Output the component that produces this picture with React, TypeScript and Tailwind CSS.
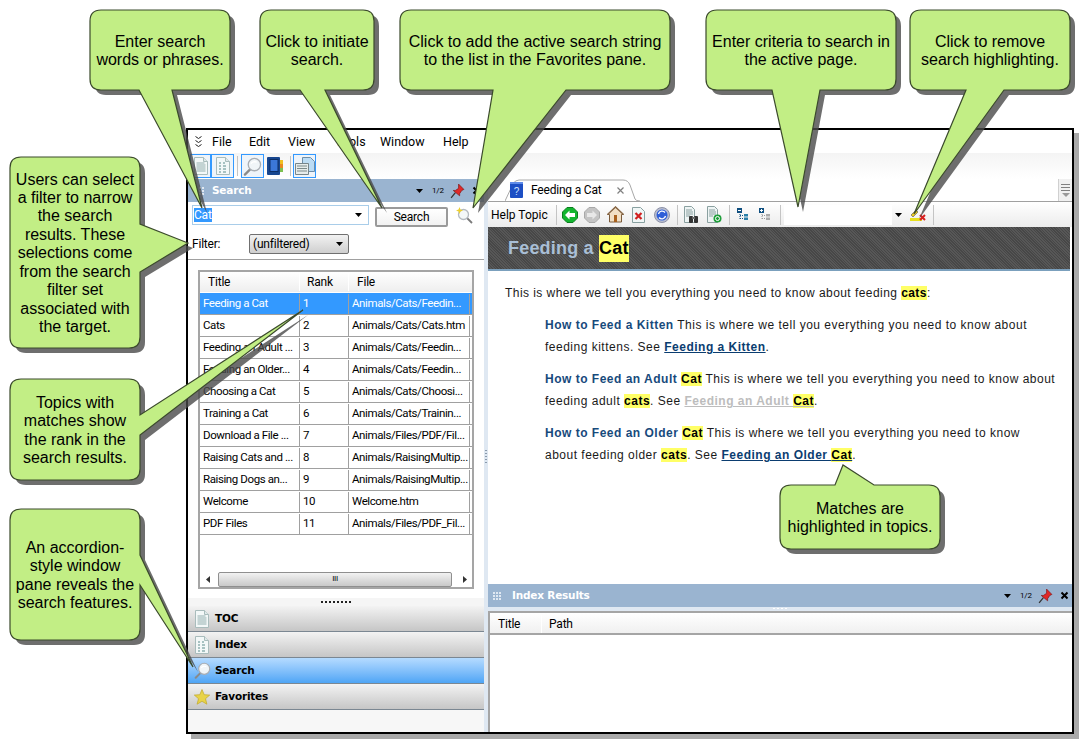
import React from "react";

type CalloutDef = {
  x: number; y: number; w: number; h: number;
  side: "bottom" | "right" | "top";
  a: number; b: number; tx: number; ty: number;
  lines: string[];
};

const callouts: CalloutDef[] = [
  { x: 90, y: 10, w: 140, h: 80, side: "bottom", a: 139, b: 172, tx: 202, ty: 208, lines: ["Enter search", "words or phrases."] },
  { x: 260, y: 10, w: 114, h: 80, side: "bottom", a: 300, b: 325, tx: 382, ty: 208, lines: ["Click to initiate", "search."] },
  { x: 400, y: 10, w: 270, h: 80, side: "bottom", a: 493, b: 566, tx: 473, ty: 208, lines: ["Click to add the active search string", "to the list in the Favorites pane."] },
  { x: 706, y: 10, w: 190, h: 80, side: "bottom", a: 772, b: 820, tx: 798, ty: 207, lines: ["Enter criteria to search in", "the active page."] },
  { x: 910, y: 10, w: 160, h: 80, side: "bottom", a: 966, b: 1004, tx: 914, ty: 214, lines: ["Click to remove", "search highlighting."] },
  { x: 10, y: 157, w: 130, h: 191, side: "right", a: 224, b: 272, tx: 188, ty: 243, lines: ["Users can select", "a filter to narrow", "the search", "results. These", "selections come", "from the search", "filter set", "associated with", "the target."] },
  { x: 10, y: 379, w: 130, h: 101, side: "right", a: 415, b: 435, tx: 303, ty: 310, lines: ["Topics with", "matches show", "the rank in the", "search results."] },
  { x: 10, y: 509, w: 130, h: 131, side: "right", a: 555, b: 585, tx: 193, ty: 667, lines: ["An accordion-", "style window", "pane reveals the", "search features."] },
  { x: 780, y: 485, w: 160, h: 64, side: "top", a: 835, b: 874, tx: 843, ty: 465, lines: ["Matches are", "highlighted in topics."] },
];

function calloutPath(c: CalloutDef) {
  const r = 11;
  const R = c.x + c.w;
  const B = c.y + c.h;
  const top = c.side === "top" ? `L${c.a},${c.y} L${c.tx},${c.ty} L${c.b},${c.y} ` : "";
  const right = c.side === "right" ? `L${R},${c.a} L${c.tx},${c.ty} L${R},${c.b} ` : "";
  const bottom = c.side === "bottom" ? `L${c.b},${B} L${c.tx},${c.ty} L${c.a},${B} ` : "";
  return `M${c.x + r},${c.y} ${top}L${R - r},${c.y} Q${R},${c.y} ${R},${c.y + r} ${right}L${R},${B - r} Q${R},${B} ${R - r},${B} ${bottom}L${c.x + r},${B} Q${c.x},${B} ${c.x},${B - r} L${c.x},${c.y + r} Q${c.x},${c.y} ${c.x + r},${c.y} Z`;
}

const Doc = ({ dots = false }: { dots?: boolean }) => (
  <svg width="14" height="18" viewBox="0 0 14 18">
    <path d="M.5.5h9l4 4v13H.5z" fill="#f3f8f8" stroke="#a9bcbc" />
    <path d="M9.5.5v4h4" fill="#dfe9e9" stroke="#a9bcbc" />
    {dots ? (
      <path d="M3 6h2M7 6h2M3 9h2M7 9h3M3 12h2M7 12h3M3 15h2M7 15h3" stroke="#8fb0b0" strokeWidth="1.4" />
    ) : (
      <path d="M2.5 6h8M2.5 8h9M2.5 10h9M2.5 12h9M2.5 14h9" stroke="#94afaf" />
    )}
  </svg>
);

const Mag = ({ s = 20 }: { s?: number }) => (
  <svg width={s} height={s} viewBox="0 0 20 20">
    <path d="M8 12.5 2 18.5" stroke="#8a8a8a" strokeWidth="2.4" strokeLinecap="round" />
    <circle cx="12" cy="8" r="6.500" fill="#f0f5f8" stroke="#a8adb3" strokeWidth="1.400" />
    <path d="M8.5 7a4 3 0 0 1 6-1.500" stroke="#fff" strokeWidth="1.400" fill="none" />
  </svg>
);

const Book = () => (
  <svg width="16" height="18" viewBox="0 0 16 18">
    <rect x="0" y="0" width="13" height="18" rx="1" fill="#17468f" />
    <rect x="3" y="2.500" width="8" height="12" fill="#3b78d8" stroke="#0d2f66" />
    <rect x="13" y="3" width="3" height="4" fill="#f0c020" />
    <rect x="13" y="7" width="3" height="4" fill="#e88a20" />
    <rect x="13" y="11" width="3" height="4" fill="#7cc050" />
  </svg>
);

const Pages = () => (
  <svg width="20" height="18" viewBox="0 0 20 18">
    <path d="M7.500.5h8l4 4v10h-12z" fill="#bcdcf4" stroke="#6f8ea8" />
    <path d="M.5 6.500h13v11H.5z" fill="#e6ecec" stroke="#77858a" />
    <path d="M2 9h10M2 11.500h10M2 14h10" stroke="#7c8a8a" />
  </svg>
);

const HelpBook = () => (
  <svg width="13" height="16" viewBox="0 0 13 16">
    <rect width="13" height="16" rx="1" fill="#1d4fc4" />
    <rect x="0" y="0" width="13" height="2" fill="#5f8be8" />
    <text x="6.500" y="12.500" fontSize="10" fontFamily="Liberation Sans, sans-serif" fill="#cfe0ff" textAnchor="middle">?</text>
  </svg>
);

const Pin = () => (
  <svg width="15" height="16" viewBox="0 0 14 15">
    <path d="M1 14 5 9" stroke="#333" strokeWidth="1.200" />
    <path d="M8 1l5 5-2 1-2 3 0 2L3 7l2 0 3-2z" fill="#e02828" stroke="#7a1010" strokeWidth=".6" />
  </svg>
);

const X = ({ c = "#000", w = 2 }: { c?: string; w?: number }) => (
  <svg width="9" height="9" viewBox="0 0 9 9"><path d="M1.500 1.500l6 6M7.500 1.500l-6 6" stroke={c} strokeWidth={w} /></svg>
);

const Caret = () => (
  <svg width="7" height="4" viewBox="0 0 7 4"><path d="M0 0h7L3.500 4z" fill="#000" /></svg>
);

const Back = ({ grey = false, flip = false }: { grey?: boolean; flip?: boolean }) => (
  <svg width="16" height="16" viewBox="0 0 16 16">
    <path d="M5 .5h6L15.500 5v6L11 15.500H5L.5 11V5z" fill={grey ? "#c4c4c4" : "#12b52e"} stroke={grey ? "#a8a8a8" : "#0a7d1e"} />
    <path d={flip ? "M13 8 8.500 3.500V6H3v4h5.500v2.500z" : "M3 8l4.500-4.500V6H13v4H7.500v2.500z"} fill={grey ? "#e8e8e8" : "#fff"} />
  </svg>
);

const House = () => (
  <svg width="17" height="17" viewBox="0 0 17 17">
    <path d="M8.500 1 .5 8.500h2V16h12V8.500h2z" fill="#f1dfc4" stroke="#7a5a3a" />
    <path d="M.5 8.500 8.500 1l8 7.500" fill="none" stroke="#8a6a4a" strokeWidth="1.400" />
    <rect x="7" y="9" width="3" height="7" fill="#a8601c" />
  </svg>
);

const DocX = () => (
  <svg width="13" height="16" viewBox="0 0 13 16">
    <path d="M.5.5h8l4 4v11H.5z" fill="#f0f6f6" stroke="#88a0a0" />
    <path d="M3.500 6l6 6M9.500 6l-6 6" stroke="#d02020" strokeWidth="2.200" />
  </svg>
);

const Refresh = () => (
  <svg width="16" height="16" viewBox="0 0 16 16">
    <circle cx="8" cy="8" r="7.500" fill="#b9bed0" stroke="#8c91a8" />
    <circle cx="8" cy="8" r="5.500" fill="#2f5fd8" />
    <path d="M4.500 7a3.700 3.700 0 0 1 6.500-1.500M11.500 9a3.700 3.700 0 0 1-6.500 1.500" stroke="#fff" strokeWidth="1.300" fill="none" />
  </svg>
);

const DocBin = () => (
  <svg width="15" height="17" viewBox="0 0 15 17">
    <path d="M.5.5h7l3 3v13h-10z" fill="#eef4f4" stroke="#8aa0a0" />
    <path d="M2 4h6M2 6h7M2 8h7M2 10h4" stroke="#8aa0a0" />
    <rect x="5" y="10" width="4" height="7" rx="1" fill="#333" />
    <rect x="10" y="10" width="4" height="7" rx="1" fill="#333" />
    <rect x="8" y="11" width="3" height="2" fill="#666" />
  </svg>
);

const DocOk = () => (
  <svg width="15" height="17" viewBox="0 0 15 17">
    <path d="M.5.5h7l3 3v13h-10z" fill="#eef4f4" stroke="#8aa0a0" />
    <path d="M2 4h6M2 6h7M2 8h7M2 10h4" stroke="#8aa0a0" />
    <circle cx="10.500" cy="12.500" r="4" fill="#1e9e3a" />
    <circle cx="10.500" cy="12.500" r="2" fill="none" stroke="#fff" />
  </svg>
);

const Tree = ({ plus = false }: { plus?: boolean }) => (
  <svg width="12" height="13" viewBox="0 0 12 13">
    <rect x="0" y="0" width="5" height="5" fill="#0f4f80" />
    <path d={plus ? "M1 2.500h3M2.500 1v3" : "M1 2.500h3"} stroke="#fff" />
    <path d="M3 6v5M3 7.500h3M3 10.500h3" stroke={plus ? "#999" : "#0f4f80"} strokeDasharray="1 1" />
    <rect x="7" y="6" width="4" height="2.500" fill={plus ? "#aaa" : "#2a7fa8"} />
    <rect x="7" y="9.500" width="4" height="2.500" fill={plus ? "#aaa" : "#2a7fa8"} />
  </svg>
);

const Wand = () => (
  <svg width="17" height="17" viewBox="0 0 17 17">
    <path d="M10.500 10.500l5.500 5.500" stroke="#7a7a7a" strokeWidth="1.800" />
    <circle cx="7.500" cy="7.500" r="5" fill="#f4f8f8" stroke="#b4bac0" strokeWidth="1.300" />
    <path d="M3.500 0l1 2.500 2.500 1-2.500 1-1 2.500-1-2.500L0 3.500l2.500-1z" fill="#ecd030" />
  </svg>
);

const Star = () => (
  <svg width="16" height="16" viewBox="0 0 16 16">
    <path d="M8 .5l2.200 5.200 5.500.4-4.200 3.600 1.400 5.500L8 12.300l-4.900 2.900 1.400-5.500L.3 6.100l5.500-.4z" fill="#e8d348" stroke="#c0a828" strokeWidth=".7" />
  </svg>
);

const Hi = ({ children }: { children: React.ReactNode }) => (
  <span className="bg-[#ffff66] font-bold text-black">{children}</span>
);

const rows = [
  ["Feeding a Cat", "1", "Animals/Cats/Feedin..."],
  ["Cats", "2", "Animals/Cats/Cats.htm"],
  ["Feeding an Adult ...", "3", "Animals/Cats/Feedin..."],
  ["Feeding an Older...", "4", "Animals/Cats/Feedin..."],
  ["Choosing a Cat", "5", "Animals/Cats/Choosi..."],
  ["Training a Cat", "6", "Animals/Cats/Trainin..."],
  ["Download a File ...", "7", "Animals/Files/PDF/Fil..."],
  ["Raising Cats and ...", "8", "Animals/RaisingMultip..."],
  ["Raising Dogs an...", "9", "Animals/RaisingMultip..."],
  ["Welcome", "10", "Welcome.htm"],
  ["PDF Files", "11", "Animals/Files/PDF_Fil..."],
];

const accordion: { label: string; icon: React.ReactNode; active?: boolean }[] = [
  { label: "TOC", icon: <Doc /> },
  { label: "Index", icon: <Doc dots /> },
  { label: "Search", icon: <Mag s={17} />, active: true },
  { label: "Favorites", icon: <Star /> },
];

const paneTitle = "font-['DejaVu_Sans',sans-serif] text-[10.5px] font-bold tracking-[-0.2px] text-white";

const PaneTools = () => (
  <div className="flex items-center">
    <Caret />
    <span className="ml-[9px] w-[12px] text-[8px] text-black">1/2</span>
    <span className="ml-[6px] flex"><Pin /></span>
    <span className="ml-[7px] flex"><X /></span>
  </div>
);

const Grip = ({ cols = 3 }: { cols?: number }) => (
  <span className={`grid gap-[1px] ${cols === 3 ? "grid-cols-3" : "grid-cols-2"}`}>
    {Array.from({ length: cols * 3 }).map((_, i) => (
      <span key={i} className="h-[2px] w-[2px] bg-[#dfe8f2]" />
    ))}
  </span>
);

const TbBtn = ({ children, w = "w-[23px]" }: { children: React.ReactNode; w?: string }) => (
  <span className={`flex h-[24px] ${w} items-center justify-center border border-[#3399ff] bg-[#eef4fa]`}>{children}</span>
);

const Sep = () => <span className="block h-[20px] w-[1px] bg-[#c4c4c4]" />;

export default function App() {
  return (
    <div className="relative h-[739px] w-[1079px] overflow-hidden bg-white font-['Roboto',sans-serif] text-[12px] tracking-[-0.2px] text-black">
      <div className="pl-[186px] pt-[128px]">
        <div className="flex h-[606px] w-[888px] flex-col border-2 border-black bg-white shadow-[5px_5px_0_#a9a9a9]">
          {/* menu bar */}
          <div className="flex h-[23px] items-center bg-white pl-[7px] pt-[1px] text-[12.500px] tracking-normal">
            <svg width="7" height="12" viewBox="0 0 7 12" className="mr-[10px]">
              <path d="M.5.5l3 2 3-2M.5 4.500l3 2 3-2M.5 8.500l3 2 3-2" stroke="#222" fill="none" />
            </svg>
            <span className="w-[37px]">File</span>
            <span className="w-[39px]">Edit</span>
            <span className="w-[47px]">View</span>
            <span className="w-[45px]">Tools</span>
            <span className="w-[63px]">Window</span>
            <span>Help</span>
          </div>
          {/* main toolbar */}
          <div className="flex h-[26px] items-center bg-gradient-to-b from-[#f4f4f4] to-[#ffffff] pl-[2px]">
            <TbBtn w="w-[21px]"><Doc /></TbBtn>
            <TbBtn><Doc dots /></TbBtn>
            <span className="mx-[3px]"><Sep /></span>
            <TbBtn><Mag s={19} /></TbBtn>
            <span className="ml-[3px] flex"><Book /></span>
            <span className="ml-[7px] mr-[2px]"><Sep /></span>
            <TbBtn><Pages /></TbBtn>
          </div>
          {/* body */}
          <div className="flex min-h-0 flex-1">
            {/* left pane */}
            <div className="flex w-[296px] flex-col">
              <div className="flex h-[23px] items-center justify-between bg-[#9ab4d0] pl-[11px] pr-[3px]">
                <div className="flex items-center gap-[8px]">
                  <Grip cols={2} />
                  <span className={paneTitle}>Search</span>
                </div>
                <PaneTools />
              </div>
              <div className="flex items-start pl-[4px] pt-[3px]">
                <div className="flex h-[20px] w-[177px] items-center justify-between border border-[#a9cde9] pl-[1px] pr-[6px]">
                  <span className="bg-[#3399ff] leading-[14px] text-white">Cat</span>
                  <Caret />
                </div>
                <div className="ml-[6px] mt-[2px] flex h-[20px] w-[73px] items-center justify-center rounded-[2px] border-2 border-[#9a9a9a] bg-gradient-to-b from-white to-[#f2f2f2]">Search</div>
                <span className="ml-[8px] mt-[2px] flex"><Wand /></span>
              </div>
              <div className="flex items-center pl-[4px] pt-[7px]">
                <span className="w-[57px]">Filter:</span>
                <div className="flex h-[20px] w-[100px] items-center justify-between rounded-[2px] border border-[#707070] bg-gradient-to-b from-[#f2f2f2] to-[#cfcfcf] pl-[3px] pr-[5px]">
                  <span>(unfiltered)</span>
                  <Caret />
                </div>
              </div>
              <div className="mt-[5px] h-[1px] bg-[#a0a0a0]" />
              {/* results list */}
              <div className="ml-[10px] mt-[10px] flex h-[319px] w-[276px] flex-col border-2 border-[#a5a5a5] text-[11.500px] tracking-[-0.4px]">
                <div className="flex h-[21px] shrink-0 items-center border-b border-white bg-gradient-to-b from-white to-[#eeeeee] text-[12px] tracking-[-0.2px]">
                  <span className="w-[100px] border-r border-white pl-[8px]">Title</span>
                  <span className="w-[49px] border-r border-white pl-[7px]">Rank</span>
                  <span className="pl-[8px]">File</span>
                </div>
                {rows.map((r, i) => (
                  <div key={r[1]} className={`flex h-[22px] shrink-0 items-center border-b border-[#a0a0a0] pt-[1px] ${i === 0 ? "bg-[#3399ff] text-white" : "bg-white"}`}>
                    <span className="flex h-full w-[100px] items-center whitespace-nowrap border-r border-[#a0a0a0] pl-[3px]">{r[0]}</span>
                    <span className="flex h-full w-[49px] items-center border-r border-[#a0a0a0] pl-[3px]">{r[1]}</span>
                    <span className="flex h-full w-[121px] items-center whitespace-nowrap border-r border-[#a0a0a0] pl-[3px]">{r[2]}</span>
                  </div>
                ))}
                <div className="flex-1" />
                <div className="flex h-[16px] shrink-0 items-center pl-[6px]">
                  <svg width="4" height="7" viewBox="0 0 4 7"><path d="M4 0v7L0 3.500z" fill="#333" /></svg>
                  <div className="ml-[8px] flex h-[15px] w-[234px] items-center justify-center rounded-[2px] border border-[#8f8f8f] bg-gradient-to-b from-[#f2f2f2] to-[#c9c9c9] text-[8px] leading-none">III</div>
                  <svg width="4" height="7" viewBox="0 0 4 7" className="ml-[11px]"><path d="M0 0v7l4-3.500z" fill="#333" /></svg>
                </div>
              </div>
              <div className="mt-[9px] flex h-[8px] justify-center bg-[#f5f5f5]">
                <span className="mt-[3px] h-[2px] w-[30px] bg-[repeating-linear-gradient(90deg,#222_0,#222_2px,transparent_2px,transparent_4px)]" />
              </div>
              {accordion.map((a) => (
                <div key={a.label} className={`flex h-[26px] items-center border-b border-[#7b8792] ${a.active ? "bg-gradient-to-b from-[#b5dbff] to-[#4ea5f5]" : "bg-gradient-to-b from-[#f3f3f3] to-[#c6c6c6]"}`}>
                  <span className="flex w-[27px] shrink-0 justify-center pl-[1px]">{a.icon}</span>
                  <span className="font-['DejaVu_Sans',sans-serif] text-[10.5px] font-bold tracking-[-0.2px]">{a.label}</span>
                </div>
              ))}
              <div className="flex-1 bg-[#f7f7f7]" />
            </div>
            {/* splitter */}
            <div className="flex w-[4px] flex-col items-center justify-center bg-[#dfe8f2]">
              <span className="h-[14px] w-[2px] bg-[repeating-linear-gradient(0deg,#8a9aab_0,#8a9aab_1px,transparent_1px,transparent_3px)]" />
            </div>
            {/* right pane */}
            <div className="flex min-w-0 flex-1 flex-col">
              <div className="relative flex h-[23px] shrink-0 items-end border-b border-[#a0a0a0] bg-white">
                <div className="relative ml-[17px] flex h-[22px] w-[135px] items-center pl-[5px]">
                  <svg width="135" height="23" viewBox="0 0 135 23" className="absolute left-0 top-0">
                    <path d="M0 22 L8 5 Q10 1 14 1 L118 1 Q123 1 125 6 L130 20 Q131 22 135 22" fill="#fff" stroke="#a8a8a8" />
                  </svg>
                  <span className="relative flex"><HelpBook /></span>
                  <span className="relative ml-[8px] w-[85px]">Feeding a Cat</span>
                  <span className="relative"><X c="#808080" w={1.200} /></span>
                </div>
                <div className="absolute right-0 top-0 flex h-[22px] w-[14px] flex-col items-center justify-center gap-[2px] border-l border-[#d0d0d0] bg-[#f0f0f0]">
                  <span className="h-[1px] w-[9px] bg-[#808080]" />
                  <span className="h-[1px] w-[9px] bg-[#808080]" />
                  <span className="h-[1px] w-[9px] bg-[#808080]" />
                  <span className="h-0 w-0 border-x-[4px] border-t-[4px] border-x-transparent border-t-[#999]" />
                </div>
              </div>
              <div className="flex h-[25px] shrink-0 items-center bg-gradient-to-b from-white to-[#ececec] pl-[3px]">
                <span className="w-[65px] tracking-normal">Help Topic</span>
                <Sep />
                <span className="ml-[5px] flex"><Back /></span>
                <span className="ml-[6px] flex"><Back grey flip /></span>
                <span className="ml-[7px] flex"><House /></span>
                <span className="ml-[8px] flex"><DocX /></span>
                <span className="ml-[9px] flex"><Refresh /></span>
                <span className="ml-[7px]"><Sep /></span>
                <span className="ml-[6px] flex"><DocBin /></span>
                <span className="ml-[8px] flex"><DocOk /></span>
                <span className="ml-[7px]"><Sep /></span>
                <span className="ml-[7px] flex"><Tree /></span>
                <span className="ml-[10px] flex"><Tree plus /></span>
                <span className="ml-[9px]"><Sep /></span>
                <div className="ml-[3px] flex h-[20px] w-[108px] bg-white" />
                <span className="ml-[3px] flex"><Caret /></span>
                <span className="ml-[8px] flex">
                  <svg width="17" height="12" viewBox="0 0 17 12">
                    <path d="M1 6 6 1l2 2-5 5z" fill="#e8c820" stroke="#555" strokeWidth=".6" />
                    <rect x="0" y="9" width="12" height="3" fill="#e8e020" />
                    <path d="M10 6l5 5M15 6l-5 5" stroke="#d82020" strokeWidth="2" />
                  </svg>
                </span>
                <span className="ml-[6px]"><Sep /></span>
              </div>
              {/* content */}
              <div className="flex min-h-0 flex-1 flex-col pr-[2px]">
                <div className="flex h-[44px] shrink-0 items-center border-b-2 border-[#7ba0bd] bg-[#4e4e4e] bg-[repeating-linear-gradient(45deg,#575757_0,#575757_1px,#474747_1px,#474747_2px)] pl-[20px] font-['Liberation_Sans',sans-serif] text-[18px] font-bold tracking-[0.2px] text-[#a9bfd6]">
                  <span className="whitespace-pre">Feeding a </span>
                  <span className="bg-[#ffff66] text-black">Cat</span>
                </div>
                <div className="min-h-0 flex-1 pl-[17px] pt-[11px] font-['Liberation_Sans',sans-serif] text-[12px] leading-[22px] tracking-[0.5px] text-[#1a1a1a]">
                  <p className="tracking-[0.44px]">This is where we tell you everything you need to know about feeding <Hi>cats</Hi>:</p>
                  <p className="mt-[10px] pl-[40px]"><b className="text-[#174a7c]">How to Feed a Kitten</b> This is where we tell you everything you need to know about<br />feeding kittens. See <b className="text-[#0b3d70] underline">Feeding a Kitten</b>.</p>
                  <p className="mt-[10px] pl-[40px]"><b className="text-[#174a7c]">How to Feed an Adult <Hi>Cat</Hi></b> This is where we tell you everything you need to know about<br />feeding adult <Hi>cats</Hi>. See <b className="text-[#bdbdbd] underline">Feeding an Adult <Hi>Cat</Hi></b>.</p>
                  <p className="mt-[10px] pl-[40px]"><b className="text-[#174a7c]">How to Feed an Older <Hi>Cat</Hi></b> This is where we tell you everything you need to know<br />about feeding older <Hi>cats</Hi>. See <b className="text-[#0b3d70] underline">Feeding an Older <Hi>Cat</Hi></b>.</p>
                </div>
              </div>
              {/* index results */}
              <div className="flex h-[23px] shrink-0 items-center justify-between bg-[#9ab4d0] pl-[5px] pr-[3px]">
                <div className="flex items-center gap-[11px]">
                  <Grip />
                  <span className={paneTitle}>Index Results</span>
                </div>
                <PaneTools />
              </div>
              <div className="flex h-[4px] shrink-0 justify-center bg-[#dfe8f2]">
                <span className="mt-[1px] h-[1px] w-[15px] bg-[repeating-linear-gradient(90deg,#fff_0,#fff_2px,transparent_2px,transparent_4px)]" />
              </div>
              <div className="h-[121px] shrink-0 border-l-2 border-t-2 border-[#a5a5a5]">
                <div className="flex h-[22px] items-center border-b-2 border-[#a5a5a5] bg-gradient-to-b from-white to-[#f0f0f0] pt-[1px]">
                  <span className="w-[52px] border-r border-white pl-[8px]">Title</span>
                  <span className="pl-[7px]">Path</span>
                </div>
              </div>
            </div>
          </div>
        </div>
      </div>

      {/* callouts */}
      <svg width="1079" height="739" viewBox="0 0 1079 739" className="pointer-events-none absolute left-0 top-0">
        {callouts.map((c, i) => (
          <g key={i}>
            <path d={calloutPath(c)} transform="translate(5 5)" fill="#4a4a4a" fillOpacity="0.8" />
            <path d={calloutPath(c)} fill="#c2ee85" stroke="#3b4a2c" strokeWidth="1.200" />
          </g>
        ))}
      </svg>
      {callouts.map((c, i) => {
        return (
          <div
            key={i}
            className="absolute flex flex-col items-center justify-center whitespace-nowrap pt-[2px] text-center font-['Liberation_Sans',sans-serif] text-[16px] leading-[18.4px] tracking-normal text-black"
            style={{ left: c.x, top: c.y, width: c.w, height: c.h }}
          >
            {c.lines.map((l) => (
              <span key={l}>{l}</span>
            ))}
          </div>
        );
      })}
    </div>
  );
}
